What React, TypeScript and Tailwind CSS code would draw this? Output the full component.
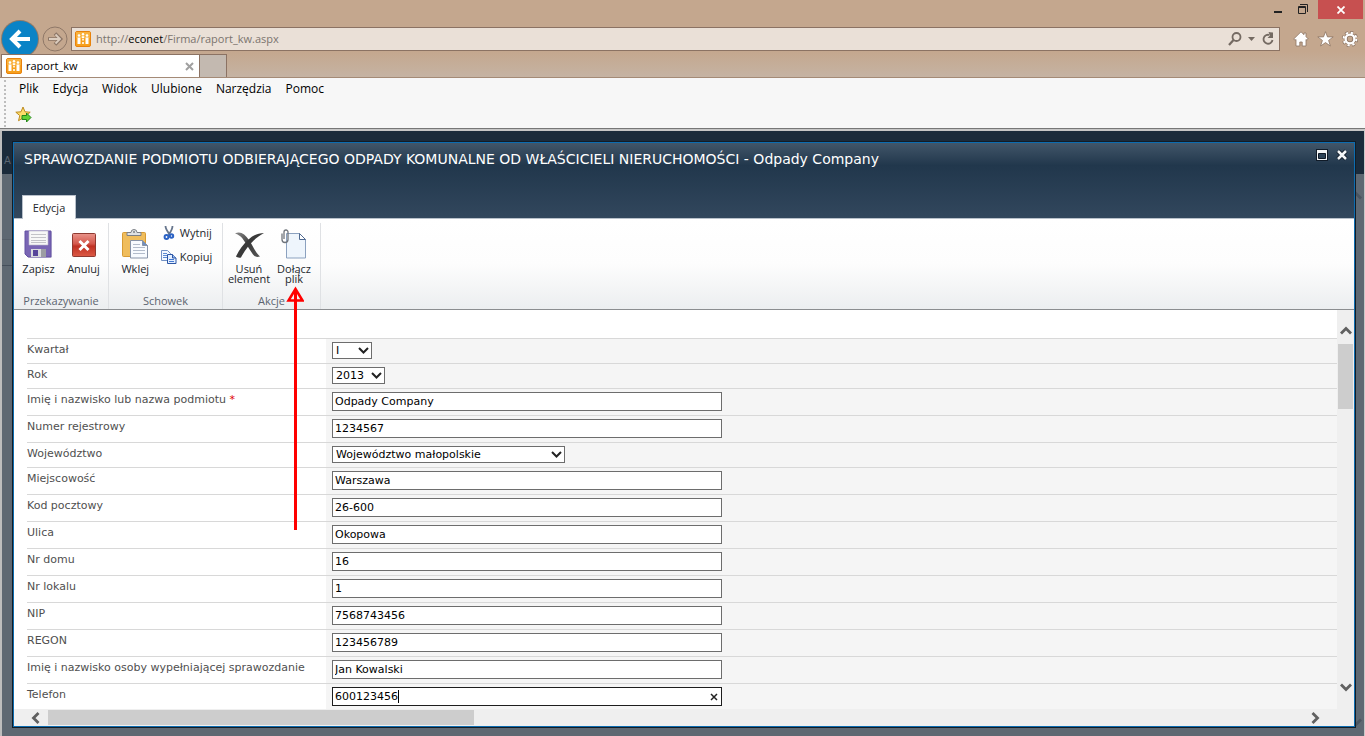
import { useState, type ReactNode } from 'react';

type Field = {
  id: string;
  label: string;
  kind: 'text' | 'select';
  value: string;
  width?: string;
  required?: boolean;
  active?: boolean;
};

const FIELDS: Field[] = [
  { id: 'kwartal', label: 'Kwartał', kind: 'select', value: 'I', width: 'w-10' },
  { id: 'rok', label: 'Rok', kind: 'select', value: '2013', width: 'w-[53px]' },
  { id: 'nazwa', label: 'Imię i nazwisko lub nazwa podmiotu', kind: 'text', value: 'Odpady Company', required: true },
  { id: 'numer', label: 'Numer rejestrowy', kind: 'text', value: '1234567' },
  { id: 'wojewodztwo', label: 'Województwo', kind: 'select', value: 'Województwo małopolskie', width: 'w-[233px]' },
  { id: 'miejscowosc', label: 'Miejscowość', kind: 'text', value: 'Warszawa' },
  { id: 'kod', label: 'Kod pocztowy', kind: 'text', value: '26-600' },
  { id: 'ulica', label: 'Ulica', kind: 'text', value: 'Okopowa' },
  { id: 'dom', label: 'Nr domu', kind: 'text', value: '16' },
  { id: 'lokal', label: 'Nr lokalu', kind: 'text', value: '1' },
  { id: 'nip', label: 'NIP', kind: 'text', value: '7568743456' },
  { id: 'regon', label: 'REGON', kind: 'text', value: '123456789' },
  { id: 'osoba', label: 'Imię i nazwisko osoby wypełniającej sprawozdanie', kind: 'text', value: 'Jan Kowalski' },
  { id: 'telefon', label: 'Telefon', kind: 'text', value: '600123456', active: true },
];

const MENU = ['Plik', 'Edycja', 'Widok', 'Ulubione', 'Narzędzia', 'Pomoc'];

function SiteIcon() {
  return (
    <svg width="16" height="16" viewBox="0 0 16 16" className="shrink-0">
      <rect x="0.5" y="0.5" width="15" height="15" rx="1.5" fill="#f7a01d" stroke="#e8820c" />
      <path d="M1 1h14v6H1z" fill="#f9b13c" />
      <g fill="#fff">
        <circle cx="4" cy="4.5" r="1.3" />
        <circle cx="8" cy="3.2" r="1.2" />
        <circle cx="12" cy="4.5" r="1.3" />
        <path d="M2.5 6.5h3V13h-3zM10.5 6.5h3V13h-3zM6.8 5.2h2.4v2H6.8z" />
        <path d="M7 8h2v1.5H7zM7 11h2v2H7z" opacity=".8" />
      </g>
    </svg>
  );
}

function SaveIcon() {
  return (
    <svg width="32" height="32" viewBox="0 0 32 32">
      <path d="M3 3h26v26H6l-3-3z" fill="#c9c6d6" opacity=".6" />
      <path d="M2 2h26v26H5l-3-3z" fill="#7965b4" stroke="#6350a2" />
      <path d="M6 2h19v14H6z" fill="#f7f7f7" stroke="#b9b5c9" strokeWidth=".6" />
      <path d="M8 5.500h15M8 8.500h15M8 11.500h15M8 13.500h15" stroke="#c3c3c8" />
      <path d="M8 20h15v8H8z" fill="#d9dadd" />
      <path d="M10 21h5v6h-5z" fill="#57449a" />
      <path d="M18 20h5v8h-5z" fill="#9c9da3" />
    </svg>
  );
}

function CancelIcon() {
  return (
    <svg width="32" height="32" viewBox="0 0 32 32">
      <defs>
        <linearGradient id="cancel-fill" x1="0" y1="0" x2="0" y2="1">
          <stop offset="0" stopColor="#e9948b" />
          <stop offset=".45" stopColor="#d4574b" />
          <stop offset=".55" stopColor="#bf3022" />
          <stop offset="1" stopColor="#dc5a45" />
        </linearGradient>
      </defs>
      <rect x="4.500" y="4.500" width="23" height="23" rx="1" fill="url(#cancel-fill)" stroke="#8f3a31" />
      <path d="m11.500 12 9 9m0-9-9 9" stroke="#fff" strokeWidth="3" />
    </svg>
  );
}

function PasteIcon() {
  return (
    <svg width="32" height="32" viewBox="0 0 32 32">
      <rect x="3.500" y="3.500" width="23" height="24" rx="1" fill="#f0bd5c" stroke="#d79b34" />
      <path d="M8 6.500V3.500h4a3 3 0 0 1 6 0h4v3z" fill="#dfe1e4" stroke="#7c8086" />
      <circle cx="15" cy="3" r="1" fill="#7c8086" />
      <path d="M11.500 11.500h12l5 5v12.500h-17z" fill="#f8fbff" stroke="#8793a8" />
      <path d="M23.500 11.500v5h5z" fill="#6f8fc0" stroke="#8793a8" />
      <path d="M14 15.500h7M14 18.500h12M14 21.500h12M14 24.500h12" stroke="#b3bccb" />
    </svg>
  );
}

function CutIcon() {
  return (
    <svg width="16" height="16" viewBox="0 0 16 16" fill="none">
      <path d="M4.500 1c0 3 2 5.500 4.500 9M11.500 1c0 3-1.500 5.500-4 9" stroke="#66758c" strokeWidth="1.800" />
      <circle cx="5.500" cy="12" r="1.900" stroke="#2b62c4" strokeWidth="2" />
      <circle cx="10.500" cy="11" r="1.700" stroke="#2b62c4" strokeWidth="2" />
    </svg>
  );
}

function CopyIcon() {
  return (
    <svg width="16" height="16" viewBox="0 0 16 16">
      <path d="M.5 1.500h6l3 3v7h-9z" fill="#f3f8ff" stroke="#7190c4" />
      <path d="M2 4.500h4M2 6.500h4M2 8.500h4" stroke="#5d8bd4" />
      <path d="M6.500 5.500h5l3.500 3.500v5.500H6.500z" fill="#e4efff" stroke="#2c56a5" />
      <path d="M11.500 5.500V9H15" fill="#9dbdf0" stroke="#2c56a5" />
      <path d="M8 10.500h5M8 12.500h5" stroke="#4479d1" />
    </svg>
  );
}

function DeleteIcon() {
  return (
    <svg width="32" height="32" viewBox="0 0 32 32">
      <defs>
        <linearGradient id="delete-fill" x1="0" y1="0" x2="1" y2="1">
          <stop offset="0" stopColor="#8a8a8a" />
          <stop offset=".5" stopColor="#3c3c3c" />
          <stop offset="1" stopColor="#555" />
        </linearGradient>
      </defs>
      <path d="M2 4.500C7 1.500 12 5 16 11c4 6 6 12 11 16.500-3 1-5 .5-7-2C16 20 13 14 9.500 9.500 7.500 7 5 5.500 2 4.500z" fill="url(#delete-fill)" />
      <path d="M31 4C24 8 19.500 12 15.500 17c-3 3.800-5.500 7.500-7.500 11.500-2 .5-4 0-5-1C6 21 10 15.500 15.500 10.500 20 6.500 25 4 31 4z" fill="#3a3a3a" />
    </svg>
  );
}

function AttachIcon() {
  return (
    <svg width="32" height="32" viewBox="0 0 32 32">
      <path d="M8.500 4.500h13l6 6v18.500h-19z" fill="#eef5fc" stroke="#8ba1bf" />
      <path d="M21.500 4.500v6h6z" fill="#fff" stroke="#506a91" />
      <path d="M4 4.500v6a3 3 0 0 0 6 0V3a2 2 0 0 0-4 0v7" fill="none" stroke="#70757c" strokeWidth="1.300" />
    </svg>
  );
}

function Chevron({ className }: { className?: string }) {
  return (
    <svg width="12" height="12" viewBox="0 0 12 12" className={className}>
      <path d="m1 8.500 5-5 5 5" fill="none" stroke="currentColor" strokeWidth="2.800" />
    </svg>
  );
}

function RibbonGroup({ title, className, children }: { title: string; className: string; children: ReactNode }) {
  return (
    <section className={`relative flex flex-col justify-between border-r border-[#dfe1e4] ${className}`}>
      <div className="flex justify-center pt-1.5">{children}</div>
      <h2 className="pb-px text-center text-[11px] leading-[14px] text-[#5c6470]">{title}</h2>
    </section>
  );
}

function RibbonButton({ icon, children }: { icon: ReactNode; children: ReactNode }) {
  return (
    <button type="button" className="flex w-[45px] flex-col items-center gap-[3px] text-[11px] leading-[10px] text-[#23272c]">
      {icon}
      <span>{children}</span>
    </button>
  );
}

function FieldRow({ field }: { field: Field }) {
  const [value, setValue] = useState(field.value);

  return (
    <div className="flex shrink-0 border-t border-[#d8d8d8]">
      <label htmlFor={field.id} className="w-[299px] shrink-0 pt-[3px] text-[11px] leading-4 whitespace-nowrap text-[#4f4f4f]">
        {field.label}
        {field.required && <span className="text-[#e00000]"> *</span>}
      </label>
      <div className="flex-1 bg-[#f5f5f5] px-1.5 pt-[3px] pb-1">
        {field.kind === 'select' ? (
          <div className={`relative ${field.width}`}>
            <select
              id={field.id}
              value={value}
              onChange={(e) => setValue(e.target.value)}
              className="block h-[17px] w-full appearance-none border border-[#6d6d6d] bg-white pl-[3px] text-[11px] leading-[15px] text-black"
            >
              <option>{field.value}</option>
            </select>
            <svg width="11" height="8" viewBox="0 0 11 8" className="pointer-events-none absolute top-[5px] right-[3px]">
              <path d="m1 1 4.500 4.500L10 1" fill="none" stroke="#222" strokeWidth="2" />
            </svg>
          </div>
        ) : (
          <div className="relative w-[390px]">
            <input
              id={field.id}
              type="text"
              value={value}
              onChange={(e) => setValue(e.target.value)}
              className={`block h-[19px] w-full border bg-white px-0.5 text-[11px] leading-4 text-black ${
                field.active ? 'border-[#1d1d1d]' : 'border-[#6d6d6d]'
              }`}
            />
            {field.active && (
              <>
                <span className="absolute top-[3px] left-[66px] h-[13px] w-px bg-black" />
                <button type="button" aria-label="Wyczyść" onClick={() => setValue('')} className="absolute top-1.5 right-1">
                  <svg width="8" height="8" viewBox="0 0 8 8">
                    <path d="m1 1 6 6m0-6L1 7" stroke="#222" strokeWidth="1.500" />
                  </svg>
                </button>
              </>
            )}
          </div>
        )}
      </div>
    </div>
  );
}

function BrowserChrome() {
  return (
    <header className="shrink-0 bg-[#c4a78e] font-['Open_Sans',sans-serif]">
      <div className="flex h-[27px] items-start justify-end gap-4 pr-0.5">
        <button type="button" aria-label="Minimalizuj" className="pt-[11px]">
          <svg width="8" height="2" viewBox="0 0 8 2"><path d="M0 0h8v2H0z" fill="#222" /></svg>
        </button>
        <button type="button" aria-label="Przywróć" className="pt-1">
          <svg width="10" height="10" viewBox="0 0 10 10" fill="none" stroke="#222">
            <path d="M.5 2.500h7v7h-7zM.5 3.500h7M2 .5h7.500V8" />
          </svg>
        </button>
        <button type="button" aria-label="Zamknij" className="-ml-1.5 flex h-[19px] w-[45px] items-center justify-center bg-[#c75050]">
          <svg width="8" height="8" viewBox="0 0 8 8"><path d="m.5.5 7 7m0-7-7 7" stroke="#fff" strokeWidth="1.800" /></svg>
        </button>
      </div>

      <div className="flex h-6 items-center pr-[7px] pl-0.5">
        <button type="button" aria-label="Wstecz" className="-my-2 size-9 shrink-0 rounded-full bg-[#0a83c6] ring-1 ring-[#8f7a69]">
          <svg width="36" height="36" viewBox="0 0 36 36">
            <path d="M28 18H10M18 10l-8 8 8 8" fill="none" stroke="#fff" strokeWidth="4" />
          </svg>
        </button>
        <button type="button" aria-label="Dalej" className="ml-1 size-[26px] shrink-0">
          <svg width="26" height="26" viewBox="0 0 26 26" fill="none">
            <circle cx="13" cy="13" r="12" stroke="#8f7868" />
            <path d="M6 13h12M13 7.500l5.500 5.500-5.500 5.500" stroke="#8b7566" strokeWidth="3.600" />
            <path d="M7 13h10M13.500 8.500l4.500 4.500-4.500 4.500" stroke="#dccdbf" strokeWidth="1.800" />
          </svg>
        </button>
        <div className="ml-[3px] flex h-6 flex-1 items-center border border-[#8b7263] bg-[#eae0d7] pr-1 pl-[3px]">
          <SiteIcon />
          <p className="flex-1 pl-[5px] text-[11px] text-[#7b746e]">
            http://<span className="text-black">econet</span>/Firma/raport_kw.aspx
          </p>
          <button type="button" aria-label="Szukaj">
            <svg width="14" height="14" viewBox="0 0 14 14" fill="none" stroke="#746a62" strokeWidth="1.800">
              <circle cx="8.500" cy="5" r="4" />
              <path d="m5.500 8-4.500 5" strokeWidth="2.200" />
            </svg>
          </button>
          <svg width="7" height="4" viewBox="0 0 7 4" className="mx-1.5"><path d="M0 0h7L3.500 4z" fill="#746a62" /></svg>
          <button type="button" aria-label="Odśwież">
            <svg width="14" height="14" viewBox="0 0 14 14">
              <path d="M11.500 8a4.500 4.500 0 1 1-3-5" fill="none" stroke="#746a62" strokeWidth="1.800" />
              <path d="M7.500 0 12 .5V6H6.500l2.500-2.500z" fill="#746a62" />
            </svg>
          </button>
        </div>
        <div className="flex items-center gap-2 pl-[13px]">
          <button type="button" aria-label="Strona główna">
            <svg width="16" height="16" viewBox="0 0 16 16">
              <path d="M8 .8.700 8l1.400 1.200.9-.8V15h3.800v-4h2.400v4H13V8.400l.9.800L15.300 8 13 5.700V2h-2v1.700z" fill="#fff" stroke="#8d7563" strokeWidth=".8" />
            </svg>
          </button>
          <button type="button" aria-label="Ulubione">
            <svg width="17" height="16" viewBox="0 0 17 16">
              <path d="m8.500.7 2 5.200h5.700l-4.600 3.500 1.800 5.600-4.900-3.400L3.600 15l1.800-5.600L.8 5.900h5.700z" fill="#fff" stroke="#8d7563" strokeWidth=".8" />
            </svg>
          </button>
          <button type="button" aria-label="Narzędzia">
            <svg width="16" height="16" viewBox="0 0 16 16" fill="none">
              <circle cx="8" cy="8" r="6.600" stroke="#8d7563" strokeWidth="3" strokeDasharray="3 2.180" />
              <circle cx="8" cy="8" r="4.300" stroke="#8d7563" strokeWidth="3.800" />
              <circle cx="8" cy="8" r="6.400" stroke="#fff" strokeWidth="2" strokeDasharray="2.300 2.730" />
              <circle cx="8" cy="8" r="4.400" stroke="#fff" strokeWidth="2.400" />
            </svg>
          </button>
        </div>
      </div>

      <div className="flex border-b border-[#a48a76] bg-linear-to-b from-[#c4a78e] to-[#c5b3a3] pt-[3px] pl-px">
        <div className="flex h-[23px] w-[199px] items-center border border-b-0 border-[#8b7263] bg-white px-1">
          <SiteIcon />
          <span className="flex-1 pl-1 text-[11px] text-black">raport_kw</span>
          <button type="button" aria-label="Zamknij kartę" className="pr-px">
            <svg width="9" height="9" viewBox="0 0 9 9"><path d="m1 1 7 7m0-7L1 8" stroke="#a0a0a0" strokeWidth="2" /></svg>
          </button>
        </div>
        <button type="button" aria-label="Nowa karta" className="h-[23px] w-[27px] border border-b-0 border-l-0 border-[#8b7263] bg-[#c3b9b0]" />
      </div>

      <div className="flex h-[50px] bg-[#f7f7f7] pt-0.5 pl-1">
        <div className="h-[47px] border-l-2 border-dotted border-[#bdbdbd]" />
        <div className="pl-[13px]">
          <nav className="flex gap-3.5 text-xs leading-[18px] text-black">
            {MENU.map((item) => (
              <button key={item} type="button">{item}</button>
            ))}
          </nav>
          <button type="button" aria-label="Dodaj do ulubionych" className="-ml-1 block pt-2">
            <svg width="17" height="17" viewBox="0 0 17 17">
              <path d="m8 1 2 4.800 5.200.4-4 3.400 1.300 5.100L8 12l-4.500 2.700 1.300-5.100-4-3.400L6 5.800z" fill="#fcdc6a" stroke="#bd8b1f" />
              <path d="M7 9.500h4.500V7l4.500 4.500-4.500 4.500v-2.500H7z" fill="#5fd136" stroke="#22861a" />
            </svg>
          </button>
        </div>
      </div>
      <div className="h-[3px] border-t border-[#777] bg-[#c6c6c6]" />
    </header>
  );
}

export default function App() {
  return (
    <div className="flex h-screen min-h-[480px] flex-col overflow-hidden bg-[#5e6872]">
      <BrowserChrome />

      <main className="flex min-h-0 flex-1 border-r border-l-2 border-r-[#c8c8c8] border-l-[#bdbdbd] font-['DejaVu_Sans',Verdana,sans-serif]">
        <div className="w-2.5 shrink-0">
          <div className="h-[43px] bg-[#1b2b3b] pt-[22px] pl-0.5 text-[10px] text-[#5b6672]">A</div>
          <div className="h-[66px] border-b border-[#545d67]" />
          <div className="h-[26px] border-b border-[#454f5b]" />
        </div>

        <div className="flex min-w-0 flex-1 flex-col bg-linear-to-b from-[#1b2b3b] to-[#1b2b3b] bg-[length:100%_43px] bg-no-repeat pt-2.5 pb-2">
          <section className="flex min-h-0 flex-1 flex-col border border-[#121c26]">
            <div className="flex min-h-0 flex-1 flex-col border border-[#0c6cb0] bg-white">
              <div className="flex h-[76px] shrink-0 flex-col justify-between border-b border-[#b9c1cb] bg-linear-to-b from-[#425669] via-[#21374c] via-30% to-[#32475d]">
                <div className="flex items-start justify-between pt-1.5 pr-1.5 pl-2.5">
                  <h1 className="text-[14px] leading-5 whitespace-nowrap text-white">
                    SPRAWOZDANIE PODMIOTU ODBIERAJĄCEGO ODPADY KOMUNALNE OD WŁAŚCICIELI NIERUCHOMOŚCI - Odpady Company
                  </h1>
                  <div className="flex gap-2">
                    <button type="button" aria-label="Maksymalizuj">
                      <svg width="12" height="12" viewBox="0 0 12 12">
                        <rect x=".5" y=".5" width="11" height="11" fill="#f4f6f8" stroke="#101b28" />
                        <path d="M2.500 4.500h7v5h-7z" fill="#2d4358" stroke="#101b28" />
                      </svg>
                    </button>
                    <button type="button" aria-label="Zamknij okno">
                      <svg width="12" height="12" viewBox="0 0 12 12">
                        <path d="m2 2 8 8m0-8-8 8" stroke="#101b28" strokeWidth="4.500" />
                        <path d="m2 2 8 8m0-8-8 8" stroke="#f4f6f8" strokeWidth="2.500" />
                      </svg>
                    </button>
                  </div>
                </div>
                <div className="-mb-px flex pl-2 font-['Open_Sans',sans-serif]">
                  <button type="button" className="h-6 w-[54px] border border-b-0 border-[#b9c1cb] bg-white pt-px text-[11px] text-[#23272c]">
                    Edycja
                  </button>
                </div>
              </div>

              <div className="flex h-[91px] shrink-0 border-b border-[#8b8d90] bg-linear-to-b from-white via-[#fdfdfd] to-[#eceef0] pt-1 font-['Open_Sans',sans-serif]">
                <RibbonGroup title="Przekazywanie" className="w-[95px]">
                  <RibbonButton icon={<SaveIcon />}>Zapisz</RibbonButton>
                  <RibbonButton icon={<CancelIcon />}>Anuluj</RibbonButton>
                </RibbonGroup>
                <RibbonGroup title="Schowek" className="w-[114px]">
                  <RibbonButton icon={<PasteIcon />}>Wklej</RibbonButton>
                  <div className="flex flex-col gap-2 pr-1.5 pl-[3px] text-[11px] leading-4 text-[#23272c]">
                    <button type="button" className="-mt-1 flex gap-[3px]">
                      <CutIcon />
                      Wytnij
                    </button>
                    <button type="button" className="flex gap-[3px]">
                      <CopyIcon />
                      Kopiuj
                    </button>
                  </div>
                </RibbonGroup>
                <RibbonGroup title="Akcje" className="w-[98px]">
                  <RibbonButton icon={<DeleteIcon />}>Usuń element</RibbonButton>
                  <RibbonButton icon={<AttachIcon />}>Dołącz plik</RibbonButton>
                  {/* pointer to the attach button */}
                  <svg width="18" height="245" viewBox="0 0 18 245" className="pointer-events-none absolute top-[63px] left-[63px] z-10">
                    <path d="M9.500 3v241" stroke="#f00" strokeWidth="3" />
                    <path d="M9.500 3 2.500 14.500h14z" fill="none" stroke="#f00" strokeWidth="2.500" />
                  </svg>
                </RibbonGroup>
              </div>

              <div className="flex min-h-0 flex-1">
                <form className="flex min-w-0 flex-1 flex-col overflow-hidden pt-7 pl-[13px]">
                  {FIELDS.map((field) => (
                    <FieldRow key={field.id} field={field} />
                  ))}
                </form>
                <div className="flex w-[17px] shrink-0 flex-col items-center bg-[#efefef] pt-[15px] text-[#606060]">
                  <Chevron />
                  <div className="mt-[7px] h-[65px] w-[15px] bg-[#cdcdcd]" />
                  <Chevron className="mt-auto mb-4 rotate-180" />
                </div>
              </div>
              <div className="flex h-[17px] shrink-0 items-center bg-[#efefef] pr-[33px] pl-4 text-[#606060]">
                <Chevron className="-rotate-90" />
                <div className="ml-1.5 h-[15px] w-[33%] bg-[#cdcdcd]" />
                <Chevron className="ml-auto rotate-90" />
              </div>
            </div>
          </section>
        </div>

        <div className="flex w-2 shrink-0 flex-col justify-between overflow-hidden pb-2 text-[#4b5560]">
          <div className="h-[70px] border-t-[43px] border-[#1b2b3b] pt-4">
            <Chevron className="-ml-1.5" />
          </div>
          <Chevron className="-ml-1.5 rotate-180" />
        </div>
      </main>
    </div>
  );
}
